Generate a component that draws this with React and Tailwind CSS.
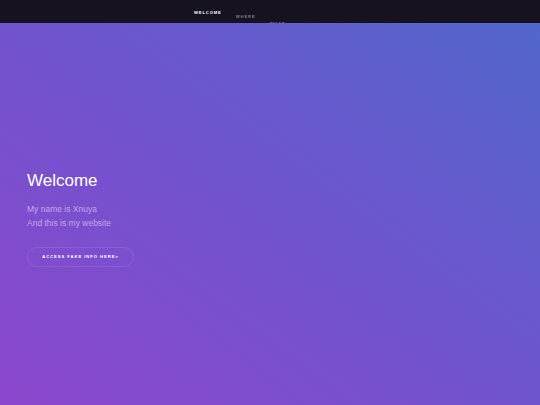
export default function App() {
  return (
    <div
      className="relative w-[540px] h-[405px] overflow-hidden bg-linear-to-tr from-[#8c47cd] via-[#6f53cf] to-[#4f68cb]"
      style={{ fontFamily: '"Liberation Sans", Arial, sans-serif' }}
    >
      {/* top navigation bar */}
      <nav className="h-[23px] bg-[#16121f] overflow-hidden">
        <ul className="flex items-start gap-[14px] pl-[194px] text-[4.2px] leading-[5px] font-bold tracking-[0.2em] uppercase">
          <li className="pt-[10px] text-white">Welcome</li>
          <li className="pt-[14px] text-[#7f7b8c]">Where</li>
          <li className="pt-[21px] text-[#7f7b8c]">What</li>
        </ul>
      </nav>

      {/* hero */}
      <section className="pl-[27px] pt-[148px]">
        <h1 className="text-[17px] leading-[20px] text-white">Welcome</h1>
        <div className="mt-[11px] text-[8.5px] leading-[14px] text-[#c1a6e9]">
          <p>My name is Xnuya</p>
          <p>And this is my website</p>
        </div>
        <a
          href="#"
          className="mt-[17px] flex items-center justify-center w-[107px] h-[20px] rounded-full border border-white/10 text-[4.2px] font-bold tracking-[0.22em] text-white"
        >
          ACCESS FAKE INFO HERE&gt;
        </a>
      </section>
    </div>
  );
}
